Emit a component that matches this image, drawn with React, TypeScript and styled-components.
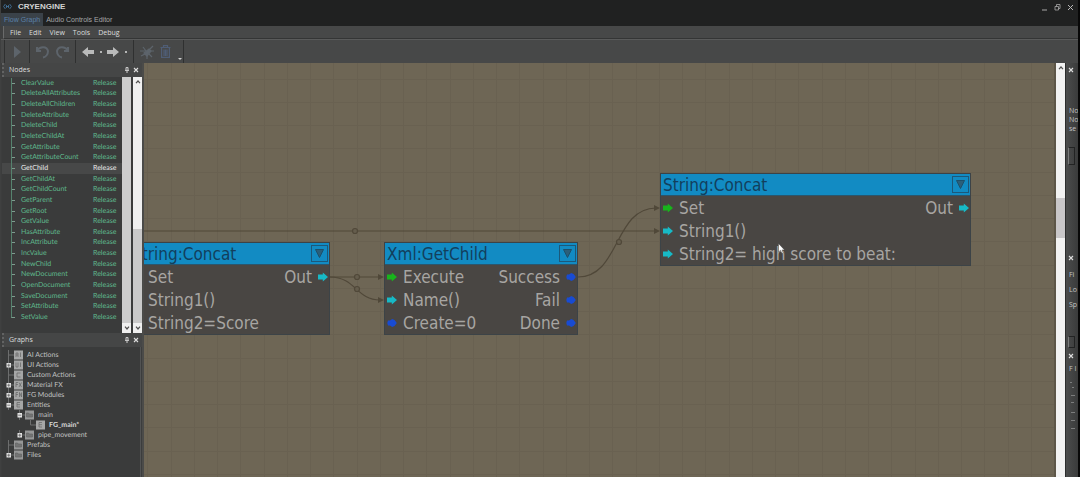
import React from "react";
import styled, { createGlobalStyle, css } from "styled-components";

const ui = `"Open Sans", "Noto Sans", sans-serif`;
const listFont = `Lato, "Open Sans", sans-serif`;
const nodeFont = `"DejaVu Sans Condensed", "DejaVu Sans", sans-serif`;

const Global = createGlobalStyle`
  * { box-sizing: border-box; }
  html, body, #root { height: 100%; }
  body { margin: 0; background: #101111; overflow: hidden; }
  button { font: inherit; color: inherit; background: none; border: 0; padding: 0; }
  ul { list-style: none; margin: 0; padding: 0; }
`;

const Window = styled.div`
  display: flex;
  flex-direction: column;
  height: 100vh;
  padding-left: 1px;
  border-right: 2px solid #080808;
  font: 7px/10px ${ui};
  color: #c6c7c7;
  background: #3f4040;
`;

const TitleBar = styled.header`
  display: flex;
  align-items: center;
  height: 13px;
  flex: none;
  padding: 0 4px 0 2px;
  gap: 6px;
  background: #202121;
`;

const AppName = styled.h1`
  flex: 1;
  margin: 0;
  font: bold 8px/12px "Liberation Sans", sans-serif;
  color: #d2d3d3;
`;

const WindowButton = styled.button`
  display: flex;
  width: 7px;
  height: 8px;
`;

const TabStrip = styled.nav`
  display: flex;
  flex: none;
  height: 13px;
  background: #202121;
  font: 7px/12px "Liberation Sans", sans-serif;
`;

const Tab = styled.button<{ $active?: boolean }>`
  padding: 0 3px;
  color: #a5a7a8;
  ${(p) => p.$active && css`
    background: #3a4249;
    color: #5b81a8;
  `}
`;

const MenuBar = styled.nav`
  display: flex;
  flex: none;
  height: 13px;
  margin-left: 2px;
  background: #474848;
  border-left: 1px solid #6a6b6b;
  border-bottom: 1px solid #343535;
  line-height: 13px;
`;

const MenuItem = styled.button`
  padding: 0 4px;
  color: #dcdddd;
  &:first-child {
    margin-left: 2px;
  }
`;

const Toolbar = styled.div`
  display: flex;
  flex: none;
  height: 24px;
  padding-left: 3px;
  background: #474848;
  border-top: 1px solid #5a5b5b;
`;

const ToolGroup = styled.div<{ $w: number; $last?: boolean }>`
  position: relative;
  display: flex;
  align-items: center;
  justify-content: space-evenly;
  width: ${(p) => p.$w}px;
  padding-right: ${(p) => (p.$last ? "6px" : "0")};
  border-left: 1px solid #2f3030;
  border-right: ${(p) => (p.$last ? "1px solid #2f3030" : "0")};
`;

const ToolButton = styled.button`
  display: flex;
  align-items: center;
`;

const Dot = styled.span`
  width: 2px;
  height: 2px;
  background: #b5b6b6;
`;

const Overflow = styled.span`
  position: absolute;
  right: 1px;
  bottom: 3px;
  border: 2px solid transparent;
  border-top-color: #d0d0d0;
  border-bottom: 0;
`;

const Body = styled.div`
  display: flex;
  flex: 1;
  min-height: 0;
`;

const Sidebar = styled.aside`
  display: flex;
  flex-direction: column;
  flex: none;
  width: 143px;
  padding-left: 1px;
  border-right: 2px solid #4b4b49;
  background: #3c3d3d;
`;

const Panel = styled.section<{ $grow?: boolean }>`
  display: flex;
  flex-direction: column;
  flex: ${(p) => (p.$grow ? "1" : "none")};
  min-height: 0;
`;

const PanelHeader = styled.div`
  display: flex;
  align-items: center;
  height: 14px;
  flex: none;
  padding: 0 3px 0 5px;
  gap: 3px;
  background: #454646;
  border-left: 2px dotted #626363;
`;

const PanelTitle = styled.h2`
  flex: 1;
  margin: 0;
  font: 7px/12px ${ui};
  color: #dcdddd;
`;

const IconButton = styled.button`
  display: flex;
  width: 6px;
  height: 6px;
`;

const ListArea = styled.div`
  display: flex;
  height: 256px;
  background: #3a3b3b;
`;

const TreeLines = styled.div`
  flex: 1;
  padding: 1px 0 10px;
  font-family: ${listFont};
  text-rendering: geometricPrecision;
`;

const NodeTable = styled.table`
  width: 100%;
  height: 100%;
  border-collapse: collapse;
  table-layout: fixed;
`;

const NodeRow = styled.tr<{ $selected?: boolean }>`
  color: ${(p) => (p.$selected ? "#e8e8e8" : "#5fb88c")};
  background: ${(p) => (p.$selected ? "#474848" : "transparent")};
`;

const BranchCell = styled.td<{ $end?: boolean }>`
  width: 19px;
  padding: 0;
  line-height: 0;
  height: 10px;
  background: linear-gradient(#56826e, #56826e) 9px 0 / 1px ${(p) => (p.$end ? "50%" : "100%")} no-repeat,
    linear-gradient(#7d9c8e, #7d9c8e) 9px 50% / 4px 1px no-repeat;
`;

const NameCell = styled.td`
  padding: 0;
  line-height: 9px;
  white-space: nowrap;
`;

const StateCell = styled(NameCell)`
  width: 29px;
`;

const Scrollbar = styled.div<{ $w: number }>`
  display: flex;
  flex-direction: column;
  align-items: center;
  justify-content: space-between;
  flex: none;
  width: ${(p) => p.$w}px;
  padding: 3px 0;
  background: #f0f0f0;
`;

const ListScrollbar = styled(Scrollbar)`
  background: linear-gradient(#cdcdcd, #cdcdcd) 0 0 / 100% 246px no-repeat #f0f0f0;
`;

const OuterScrollbar = styled(Scrollbar)`
  margin-left: 2px;
  background: linear-gradient(#c9c9c9, #c9c9c9) 0 152px / 100% 94px no-repeat #f0f0f0;
`;

const CanvasScrollbar = styled(Scrollbar)`
  background: linear-gradient(#c9c7c9, #c9c7c9) 0 36% / 100% 40px no-repeat #f2f2f2;
`;

const Spacer = styled.span`
  height: 4px;
`;

const GraphTree = styled.ul`
  flex: 1;
  margin-right: 1px;
  padding-top: 3px;
  background: #3a3b3b;
  border-right: 1px solid #525353;
  font-family: ${listFont};
  text-rendering: geometricPrecision;
`;

const GraphRow = styled.li<{ $depth: number }>`
  display: flex;
  align-items: center;
  height: 10px;
  padding-left: ${(p) => 4 + p.$depth * 11}px;
  color: #c0c1c1;
  white-space: nowrap;
`;

const Label = styled.span<{ $bold?: boolean }>`
  margin-left: 4px;
  ${(p) => p.$bold && "font-weight: 700; color: #d8d8d8;"}
`;

const Toggle = styled.span`
  display: flex;
  width: 8px;
`;

const gridLine = "#696151";
const gridStops = [0, 23, 46, 69]
  .map((n) => `transparent ${n}px ${n + 22}px, ${gridLine} ${n + 22}px ${n + 23}px`)
  .join(", ");

const Canvas = styled.main`
  position: relative;
  flex: 1;
  overflow: hidden;
  border-right: 2px solid #5d5648;
  background:
    repeating-linear-gradient(90deg, ${gridStops}, transparent 92px 93px) 5px 0 / 93px 93px,
    repeating-linear-gradient(${gridStops}, transparent 92px 93px) 0 -6px / 93px 93px,
    #6e6655;
`;

const Wires = styled.svg`
  position: absolute;
  inset: 0;
  width: 100%;
  height: 100%;
`;

const NodeBox = styled.article<{ $x: number; $y: number; $w: number }>`
  position: absolute;
  left: ${(p) => p.$x}px;
  top: ${(p) => p.$y}px;
  width: ${(p) => p.$w}px;
  border: 1px solid #3c4347;
  background: #494643;
  color: #a7a5a2;
  font: 17px/21px ${nodeFont};
  white-space: pre;
`;

const NodeHeader = styled.header`
  display: flex;
  align-items: center;
  justify-content: space-between;
  height: 22px;
  padding: 0 1px 0 2px;
  background: #128bc3;
  border-bottom: 1px solid #2b566d;
  color: #123f5d;
`;

const NodeTitle = styled.h3`
  margin: 0;
  font: 17px/20px ${nodeFont};
`;

const Collapse = styled.button`
  display: flex;
  align-items: center;
  justify-content: center;
  width: 17px;
  height: 17px;
  border: 1px solid #1c587a;
`;

const PortRow = styled.div`
  display: flex;
  justify-content: space-between;
  height: 23px;
  padding: 0 1px 0 2px;
`;

const Port = styled.span`
  display: flex;
  align-items: center;
  gap: 6px;
`;

const PortLabel = styled.span`
  padding-top: 2px;
`;

const Cursor = styled.svg`
  position: absolute;
  left: 634px;
  top: 180px;
`;

const Dock = styled.aside`
  display: flex;
  flex-direction: column;
  flex: none;
  width: 13px;
  padding: 4px 0 0 2px;
  overflow: hidden;
  background: linear-gradient(90deg, #4b4c4c, #3a3b3b);
  border-left: 1px solid #2c2d2d;
  color: #c3c4c4;
  white-space: nowrap;
`;

const DockSection = styled.section<{ $h?: number }>`
  flex: none;
  height: ${(p) => (p.$h ? `${p.$h}px` : "auto")};
`;

const DockText = styled.p<{ $top: number; $lh: number }>`
  margin: ${(p) => p.$top}px 0 0 1px;
  line-height: ${(p) => p.$lh}px;
  white-space: pre;
`;

const DockBox = styled.div<{ $top: number; $h: number }>`
  width: 7px;
  height: ${(p) => p.$h}px;
  margin-top: ${(p) => p.$top}px;
  border: 1px solid #222323;
  border-left-color: #7b7c7c;
`;

const Close = () => (
  <svg width="6" height="6" viewBox="0 0 6 6" stroke="#dedede" strokeWidth="1.1"><path d="M1 1L5 5M5 1L1 5" /></svg>
);
const Pin = () => (
  <svg width="6" height="6" viewBox="0 0 6 6" stroke="#dedede" fill="none" strokeWidth=".9"><path d="M2 .5V3.2M4 .5V3.2M2 .6H4M1 3.4H5M3 3.4V6" /></svg>
);
const Chevron = ({ down }: { down?: boolean }) => (
  <svg width="6" height="4" viewBox="0 0 6 4" fill="none" stroke="#505050" strokeWidth="1.2"><path d={down ? "M1 .7L3 3L5 .7" : "M1 3.2L3 1L5 3.2"} /></svg>
);

const portColors = { green: "#18b41c", cyan: "#17b9c6", blue: "#184bd3" };
type PortColor = keyof typeof portColors;

const PortIcon = ({ color }: { color: PortColor }) => (
  <svg width="10" height="10" viewBox="0 0 10 10" fill={portColors[color]}>
    {color === "blue" ? <path d="M1 2.6H3L5.2 1L7.6 2L9.8 5L7.6 8L5.2 9L3 7.4H1L.3 5Z" /> : <path d="M0 2.4H4.8V.4L10 5L4.8 9.6V7.6H0Z" />}
  </svg>
);

type PortDef = { label: string; color: PortColor };
type NodeProps = { title: string; x: number; y: number; w: number; inputs: PortDef[]; outputs: PortDef[] };

const FlowNode = ({ title, x, y, w, inputs, outputs }: NodeProps) => (
  <NodeBox $x={x} $y={y} $w={w}>
    <NodeHeader>
      <NodeTitle>{title}</NodeTitle>
      <Collapse aria-label={`Collapse ${title}`}>
        <svg width="11" height="11" viewBox="0 0 11 11" fill="#2b5f7a" stroke="#1d506b"><path d="M1.5 1.5H9.5L5.5 9.5Z" /></svg>
      </Collapse>
    </NodeHeader>
    {inputs.map((p, i) => (
      <PortRow key={p.label}>
        <Port><PortIcon color={p.color} /><PortLabel>{p.label}</PortLabel></Port>
        {outputs[i] && <Port><PortLabel>{outputs[i].label}</PortLabel><PortIcon color={outputs[i].color} /></Port>}
      </PortRow>
    ))}
  </NodeBox>
);

const flowNodes: NodeProps[] = [
  {
    title: "String:Concat", x: -15, y: 179, w: 201,
    inputs: [{ label: "Set", color: "green" }, { label: "String1()", color: "cyan" }, { label: "String2=Score", color: "cyan" }],
    outputs: [{ label: "Out", color: "cyan" }],
  },
  {
    title: "Xml:GetChild", x: 240, y: 179, w: 194,
    inputs: [{ label: "Execute", color: "green" }, { label: "Name()", color: "cyan" }, { label: "Create=0", color: "blue" }],
    outputs: [{ label: "Success", color: "blue" }, { label: "Fail", color: "blue" }, { label: "Done", color: "blue" }],
  },
  {
    title: "String:Concat", x: 516, y: 110, w: 311,
    inputs: [{ label: "Set", color: "green" }, { label: "String1()", color: "cyan" }, { label: "String2= high score to beat:", color: "cyan" }],
    outputs: [{ label: "Out", color: "cyan" }],
  },
];

const nodeNames = [
  "ClearValue", "DeleteAllAttributes", "DeleteAllChildren", "DeleteAttribute", "DeleteChild", "DeleteChildAt",
  "GetAttribute", "GetAttributeCount", "GetChild", "GetChildAt", "GetChildCount", "GetParent", "GetRoot", "GetValue",
  "HasAttribute", "IncAttribute", "IncValue", "NewChild", "NewDocument", "OpenDocument", "SaveDocument",
  "SetAttribute", "SetValue",
];

type Entry = { label: string; icon: string; depth: number; toggle?: "+" | "-"; bold?: boolean };
const graphs: Entry[] = [
  { label: "AI Actions", icon: "ai", depth: 0 },
  { label: "UI Actions", icon: "ui", depth: 0, toggle: "+" },
  { label: "Custom Actions", icon: "c", depth: 0 },
  { label: "Material FX", icon: "fx", depth: 0, toggle: "+" },
  { label: "FG Modules", icon: "fn", depth: 0, toggle: "+" },
  { label: "Entities", icon: "e", depth: 0, toggle: "-" },
  { label: "main", icon: "folder", depth: 1, toggle: "-" },
  { label: "FG_main*", icon: "e", depth: 2, bold: true },
  { label: "pipe_movement", icon: "folder", depth: 1, toggle: "+" },
  { label: "Prefabs", icon: "folder", depth: 0 },
  { label: "Files", icon: "folder", depth: 0, toggle: "+" },
];

const glyphs: Record<string, string> = {
  ai: "M2 7V3H4V7M2 5H4M6.5 2.5V7",
  ui: "M2 2.5V7H4V2.5M6.5 2.5V7",
  c: "M6.5 3H3V7H6.5",
  fx: "M2 7V2.5H4M2 4.5H4M5 2.5L7.5 7M7.5 2.5L5 7",
  fn: "M2 7V2.5H4M2 4.5H4M5.5 7V2.5L7.5 7V2.5",
  e: "M6 2.5H3V7H6M3 4.7H6",
  folder: "M1.5 3H3.5L4.2 4H7.5V7H1.5Z",
};

const GraphIcon = ({ kind }: { kind: string }) => (
  <svg width="9" height="10" viewBox="0 0 9 10">
    <rect y=".5" width="9" height="9" fill={kind === "folder" ? "#969797" : "#a6a7a7"} />
    <path d={glyphs[kind]} fill={kind === "folder" ? "#737474" : "none"} stroke="#646565" strokeWidth=".7" />
  </svg>
);

const Branch = ({ entry, last }: { entry: Entry; last: boolean }) => (
  <Toggle>
    <svg width="8" height="10" viewBox="0 0 8 10">
      <path d={last ? "M2.5 0V5H8" : "M2.5 0V10M2.5 5H8"} stroke="#6d6e6e" strokeWidth="1" fill="none" />
      {entry.toggle && (
        <>
          <rect x=".5" y="3" width="4.5" height="4.5" fill="#e4e4e4" />
          <path d={entry.toggle === "+" ? "M1.2 5.2H4.3M2.75 3.7V6.8" : "M1.2 5.2H4.3"} stroke="#555" strokeWidth=".7" />
        </>
      )}
    </svg>
  </Toggle>
);

const Wire = ({ d, cx, cy }: { d: string; cx: number; cy: number }) => (
  <>
    <path d={d} />
    <circle cx={cx} cy={cy} r="2.5" fill="#655d4d" />
  </>
);

const dim = "#5d646b";

export default function App() {
  return (
    <>
      <Global />
      <Window>
        <TitleBar>
          <svg width="9" height="7" viewBox="0 0 9 7" fill="none" stroke="#43739c" strokeWidth=".9">
            <path d="M2.4 1L.6 3.5L2.4 6M6.6 1L8.4 3.5L6.6 6M3.4 2V5M5.6 2V5M3 3.5H6" />
          </svg>
          <AppName>CRYENGINE</AppName>
          <WindowButton aria-label="Minimize"><svg width="7" height="8"><path d="M1 7H6" stroke="#a8a8a8" /></svg></WindowButton>
          <WindowButton aria-label="Restore"><svg width="7" height="8" fill="none" stroke="#a8a8a8" strokeWidth=".8"><path d="M1 3.5H4.5V7H1ZM2.5 3.5V1.5H6V5.5H4.5" /></svg></WindowButton>
          <WindowButton aria-label="Close"><svg width="7" height="8" stroke="#b8b8b8"><path d="M1 2L6 7M6 2L1 7" /></svg></WindowButton>
        </TitleBar>
        <TabStrip>
          <Tab $active>Flow Graph</Tab>
          <Tab>Audio Controls Editor</Tab>
        </TabStrip>
        <MenuBar>
          {["File", "Edit", "View", "Tools", "Debug"].map((m) => <MenuItem key={m}>{m}</MenuItem>)}
        </MenuBar>
        <Toolbar>
          <ToolGroup $w={25}>
            <ToolButton aria-label="Play"><svg width="9" height="12"><path d="M1 0V12L8 6Z" fill={dim} /></svg></ToolButton>
          </ToolGroup>
          <ToolGroup $w={46}>
            <ToolButton aria-label="Undo"><svg width="15" height="14" fill="none" stroke={dim} strokeWidth="2"><path d="M2 2V6H6M2 5.5C5 1 12 1 13 6C13 9 11 12 8 12.5" /></svg></ToolButton>
            <ToolButton aria-label="Redo"><svg width="15" height="14" fill="none" stroke={dim} strokeWidth="2"><path d="M13 2V6H9M13 5.5C10 1 3 1 2 6C2 9 4 12 7 12.5" /></svg></ToolButton>
          </ToolGroup>
          <ToolGroup $w={58}>
            <ToolButton aria-label="Back"><svg width="12" height="10"><path d="M0 5L6 0V3H12V7H6V10Z" fill="#b9baba" /></svg></ToolButton>
            <Dot />
            <ToolButton aria-label="Forward"><svg width="12" height="10"><path d="M12 5L6 0V3H0V7H6V10Z" fill="#b9baba" /></svg></ToolButton>
            <Dot />
          </ToolGroup>
          <ToolGroup $w={51} $last>
            <ToolButton aria-label="Toggle debugging">
              <svg width="14" height="14" stroke={dim} strokeWidth="1.2"><path d="M4 8L9 4L11 6L7 11Z" fill={dim} /><path d="M0 6H5M1 11L5 9M7 14V10M3 2L6 6M9 5L13 1M10 6H14M9 9L12 12" fill="none" /></svg>
            </ToolButton>
            <ToolButton aria-label="Delete">
              <svg width="11" height="13" fill="none" stroke="#4f5d75" strokeWidth="1.2"><path d="M.5 2.5H10.5M3.5 2V.6H7.5V2M1.6 3V12.3H9.4V3M4 4.5V11M5.5 4.5V11M7 4.5V11" /></svg>
            </ToolButton>
            <Overflow />
          </ToolGroup>
        </Toolbar>
        <Body>
          <Sidebar>
            <Panel>
              <PanelHeader>
                <PanelTitle>Nodes</PanelTitle>
                <IconButton aria-label="Pin Nodes"><Pin /></IconButton>
                <IconButton aria-label="Close Nodes"><Close /></IconButton>
              </PanelHeader>
              <ListArea>
                <TreeLines>
                  <NodeTable>
                    <tbody>
                      {nodeNames.map((n, i) => (
                        <NodeRow key={n} $selected={n === "GetChild"}>
                          <BranchCell $end={i === nodeNames.length - 1} />
                          <NameCell>{n}</NameCell>
                          <StateCell>Release</StateCell>
                        </NodeRow>
                      ))}
                    </tbody>
                  </NodeTable>
                </TreeLines>
                <ListScrollbar $w={9}><Spacer /><Chevron down /></ListScrollbar>
                <OuterScrollbar $w={9}><Chevron /><Chevron down /></OuterScrollbar>
              </ListArea>
            </Panel>
            <Panel $grow>
              <PanelHeader>
                <PanelTitle>Graphs</PanelTitle>
                <IconButton aria-label="Pin Graphs"><Pin /></IconButton>
                <IconButton aria-label="Close Graphs"><Close /></IconButton>
              </PanelHeader>
              <GraphTree>
                {graphs.map((g, i) => (
                  <GraphRow key={g.label} $depth={g.depth}>
                    <Branch entry={g} last={g.depth === 2 || g.label === "pipe_movement" || i === graphs.length - 1} />
                    <GraphIcon kind={g.icon} />
                    <Label $bold={g.bold}>{g.label}</Label>
                  </GraphRow>
                ))}
              </GraphTree>
            </Panel>
          </Sidebar>
          <Canvas>
            <Wires fill="none" stroke="#504839" strokeWidth="1.2">
              <Wire d="M0 168H512" cx={211} cy={168} />
              <Wire d="M186 214H236" cx={213} cy={214} />
              <Wire d="M186 214C212 214 212 237 236 237" cx={213} cy={226} />
              <Wire d="M434 214C476 214 470 145 512 145" cx={475} cy={179} />
              <path d="M510 142L516 145L510 148ZM510 165L516 168L510 171ZM234 211L240 214L234 217ZM234 234L240 237L234 240Z" fill="#504839" stroke="none" />
            </Wires>
            {flowNodes.map((n) => <FlowNode key={n.x} {...n} />)}
            <Cursor width="7" height="11" viewBox="0 0 7 11"><path d="M.5 .5V9L2.5 7.3L4 10.5L5.2 10L4 6.9H6.5Z" fill="#fff" stroke="#333" strokeWidth=".4" /></Cursor>
          </Canvas>
          <CanvasScrollbar $w={9}><Chevron /></CanvasScrollbar>
          <Dock>
            <DockSection $h={188}>
              <IconButton aria-label="Close properties"><Close /></IconButton>
              <DockText $top={33} $lh={9}>{"No\nNo\nse"}</DockText>
              <DockBox $top={14} $h={18} />
            </DockSection>
            <DockSection $h={98}>
              <IconButton aria-label="Close search"><Close /></IconButton>
              <DockText $top={6} $lh={15}>{"Fi\nLo\nSp"}</DockText>
              <DockBox $top={24} $h={12} />
            </DockSection>
            <DockSection>
              <IconButton aria-label="Close results"><Close /></IconButton>
              <DockText $top={3} $lh={14}>F I</DockText>
              <svg width="9" height="56" stroke="#7c7d7d"><path d="M2 6.5H4M4 11.5H6M3 19.5H7M3 26.5H6M3 36.5H7M3 44.5H7M3 52.5H7" /></svg>
            </DockSection>
          </Dock>
        </Body>
      </Window>
    </>
  );
}
